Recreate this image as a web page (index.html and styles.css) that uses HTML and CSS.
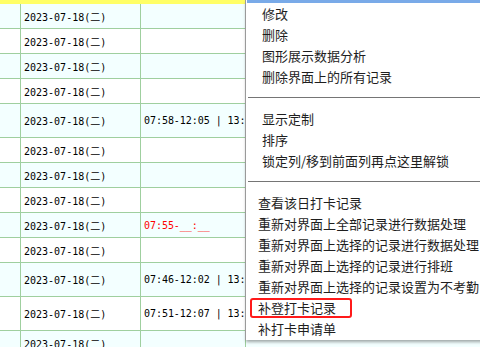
FILE: index.html
```html
<!DOCTYPE html>
<html lang="zh">
<head>
  <meta charset="UTF-8">
  <title>考勤记录</title>
  <link rel="stylesheet" href="styles.css">
</head>
<body>
  <div class="grid">
    <div class="head"></div>
    <div class="row alt"><div class="c c1"></div><div class="c c2">2023-07-18(二)</div><div class="c c3"></div><div class="c c4"></div></div>
    <div class="row"><div class="c c1"></div><div class="c c2">2023-07-18(二)</div><div class="c c3"></div><div class="c c4"></div></div>
    <div class="row alt"><div class="c c1"></div><div class="c c2">2023-07-18(二)</div><div class="c c3"></div><div class="c c4"></div></div>
    <div class="row"><div class="c c1"></div><div class="c c2">2023-07-18(二)</div><div class="c c3"></div><div class="c c4"></div></div>
    <div class="row alt tall"><div class="c c1"></div><div class="c c2">2023-07-18(二)</div><div class="c c3">07:58-12:05 | 13:</div><div class="c c4"></div></div>
    <div class="row"><div class="c c1"></div><div class="c c2">2023-07-18(二)</div><div class="c c3"></div><div class="c c4"></div></div>
    <div class="row alt"><div class="c c1"></div><div class="c c2">2023-07-18(二)</div><div class="c c3"></div><div class="c c4"></div></div>
    <div class="row"><div class="c c1"></div><div class="c c2">2023-07-18(二)</div><div class="c c3"></div><div class="c c4"></div></div>
    <div class="row alt"><div class="c c1"></div><div class="c c2">2023-07-18(二)</div><div class="c c3 miss">07:55-__:__</div><div class="c c4"></div></div>
    <div class="row"><div class="c c1"></div><div class="c c2">2023-07-18(二)</div><div class="c c3"></div><div class="c c4"></div></div>
    <div class="row alt tall"><div class="c c1"></div><div class="c c2">2023-07-18(二)</div><div class="c c3">07:46-12:02 | 13:</div><div class="c c4"></div></div>
    <div class="row tall"><div class="c c1"></div><div class="c c2">2023-07-18(二)</div><div class="c c3">07:51-12:07 | 13:</div><div class="c c4"></div></div>
    <div class="row alt"><div class="c c1"></div><div class="c c2">2023-07-18(二)</div><div class="c c3"></div><div class="c c4"></div></div>
  </div>

  <div class="menu">
    <div class="menu-top"></div>
    <div class="group first">
      <div class="item">修改</div>
      <div class="item">删除</div>
      <div class="item">图形展示数据分析</div>
      <div class="item">删除界面上的所有记录</div>
    </div>
    <div class="sep"></div>
    <div class="group">
      <div class="item">显示定制</div>
      <div class="item">排序</div>
      <div class="item">锁定列/移到前面列再点这里解锁</div>
    </div>
    <div class="sep"></div>
    <div class="group last">
      <div class="item">查看该日打卡记录</div>
      <div class="item">重新对界面上全部记录进行数据处理</div>
      <div class="item">重新对界面上选择的记录进行数据处理</div>
      <div class="item">重新对界面上选择的记录进行排班</div>
      <div class="item">重新对界面上选择的记录设置为不考勤</div>
      <div class="item">补登打卡记录</div>
      <div class="item">补打卡申请单</div>
    </div>
    <div class="mark"></div>
  </div>
</body>
</html>
```

FILE: styles.css
```css
body {
  margin: 0;
  width: 480px;
  height: 347px;
  overflow: hidden;
  background: #fff;
  position: relative;
}
.grid {
  width: 480px;
  font-family: "DejaVu Sans Mono", "Noto Sans CJK SC", monospace;
  font-size: 10px;
  color: #000;
}
.head {
  height: 4px;
  background: #ffff66;
}
.row {
  display: flex;
  height: 24px;
  border-bottom: 1px solid #9fcf9f;
  background: #fff;
}
.row.alt {
  background: #f3ffff;
}
.row.tall {
  height: 33px;
}
.c {
  box-sizing: border-box;
  display: flex;
  align-items: center;
  border-right: 1px solid #9fcf9f;
  white-space: nowrap;
  overflow: hidden;
}
.c1 { width: 21px; }
.c2 { width: 120px; padding-left: 3px; }
.c3 { width: 105px; padding-left: 3px; letter-spacing: -0.05px; }
.c4 { flex: 1; border-right: none; }
.miss {
  color: #ff0000;
}

/* контекстное меню */
.menu {
  position: absolute;
  top: 0;
  left: 245px;
  width: 240px;
  height: 340px;
  background: #fff;
  border-left: 1px solid #9a9a9a;
  box-shadow: 1px 2px 3px rgba(0, 0, 0, 0.35);
  font-family: "Noto Sans CJK SC", sans-serif;
  font-size: 13px;
  color: #1e1e1e;
}
.menu-top {
  height: 3px;
  margin-left: 1px;
  background: #79aae8;
}
.group {
  padding: 10px 0;
}
.group.first {
  padding-top: 0;
}
.group.last {
  padding-bottom: 0;
}
.item {
  height: 21px;
  line-height: 21px;
  padding-left: 16px;
  white-space: nowrap;
}
.group.last .item {
  padding-left: 12px;
}
.sep {
  height: 1px;
  margin-left: 2px;
  background: #757575;
}
.mark {
  position: absolute;
  left: 4px;
  top: 298px;
  width: 102px;
  height: 20px;
  box-sizing: border-box;
  border: 2px solid #ff1a1a;
  border-radius: 3px;
}
```
